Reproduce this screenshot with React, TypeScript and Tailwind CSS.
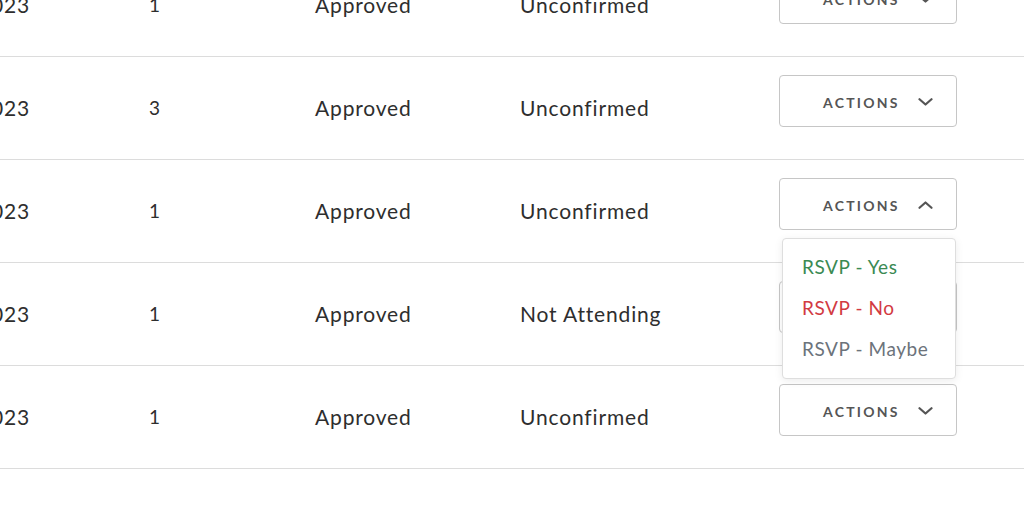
import React from "react";

type Row = { date: string; guests: string; status: string; rsvp: string; open?: boolean };

const rows: Row[] = [
  { date: "Oct 14, 2023", guests: "1", status: "Approved", rsvp: "Unconfirmed" },
  { date: "Oct 14, 2023", guests: "3", status: "Approved", rsvp: "Unconfirmed" },
  { date: "Oct 14, 2023", guests: "1", status: "Approved", rsvp: "Unconfirmed", open: true },
  { date: "Oct 14, 2023", guests: "1", status: "Approved", rsvp: "Not Attending" },
  { date: "Oct 14, 2023", guests: "1", status: "Approved", rsvp: "Unconfirmed" },
];

function Chevron({ up }: { up?: boolean }) {
  return (
    <svg width="15" height="8" viewBox="0 0 15 8" fill="none" className={up ? "rotate-180" : ""}>
      <polyline points="1.5,1.2 7.5,6.5 13.5,1.2" stroke="#555" strokeWidth="2.2" strokeLinecap="round" strokeLinejoin="round" />
    </svg>
  );
}

function ActionsMenu({ open }: { open?: boolean }) {
  return (
    <div className="relative self-start mt-[18px] w-[178px]">
      <button className="flex h-[52px] w-full items-center gap-[18px] rounded-[4px] border border-[#c6c6c6] bg-white pl-[43px] pt-[2px] text-[14px] font-bold tracking-[0.16em] text-[#555]">
        ACTIONS
        <Chevron up={open} />
      </button>
      {open && (
        <div className="absolute left-[3px] top-[60px] z-10 w-[174px] rounded-[4px] border border-[#dedede] bg-white py-[8px] shadow-[0_2px_8px_rgba(0,0,0,0.08)]">
          <div className="flex h-[41px] items-center pl-[19px] text-[19px] tracking-[0.03em] text-[#3b8a53]">RSVP - Yes</div>
          <div className="flex h-[41px] items-center pl-[19px] text-[19px] tracking-[0.03em] text-[#d23a42]">RSVP - No</div>
          <div className="flex h-[41px] items-center pl-[19px] text-[19px] tracking-[0.03em] text-[#6c737b]">RSVP - Maybe</div>
        </div>
      )}
    </div>
  );
}

export default function App() {
  return (
    <main className="h-[509px] w-[1024px] overflow-hidden bg-white font-['Lato','Open_Sans',sans-serif] text-[#2e2e2e]">
      <div className="-mt-[46px]">
        {rows.map((r, i) => (
          <div
            key={i}
            className="grid h-[103px] grid-cols-[149px_166px_205px_259px_1fr] items-center border-b border-[#dcdcdc] text-[21px] tracking-[0.04em]"
          >
            <div className="flex w-[30px] justify-end whitespace-nowrap">{r.date}</div>
            <div className="text-[19px]">{r.guests}</div>
            <div>{r.status}</div>
            <div>{r.rsvp}</div>
            <ActionsMenu open={r.open} />
          </div>
        ))}
      </div>
    </main>
  );
}
